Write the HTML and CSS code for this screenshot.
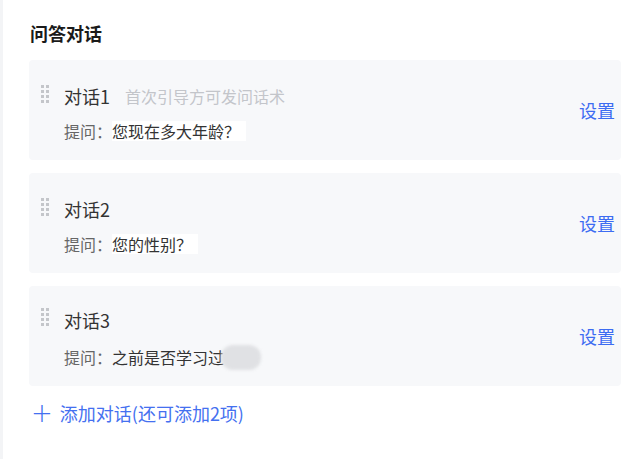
FILE: index.html
```html
<!DOCTYPE html>
<html lang="zh-CN">
<head>
  <meta charset="UTF-8">
  <meta name="viewport" content="width=device-width, initial-scale=1">
  <title>问答对话</title>
  <link rel="stylesheet" href="styles.css">
</head>
<body>
  <!-- Panel de diálogos -->
  <div class="panel">
    <h2 class="panel-title">问答对话</h2>

    <div class="dialog">
      <div class="dialog-main">
        <div class="dialog-head">
          <span class="handle"><i></i><i></i><i></i><i></i><i></i><i></i><i></i><i></i></span>
          <span class="dialog-name">对话1</span>
          <span class="dialog-hint">首次引导方可发问话术</span>
        </div>
        <div class="dialog-ask">提问：<span class="ask-text hl">您现在多大年龄？</span></div>
      </div>
      <a class="dialog-set" href="#">设置</a>
    </div>

    <div class="dialog">
      <div class="dialog-main">
        <div class="dialog-head">
          <span class="handle"><i></i><i></i><i></i><i></i><i></i><i></i><i></i><i></i></span>
          <span class="dialog-name">对话2</span>
        </div>
        <div class="dialog-ask">提问：<span class="ask-text hl">您的性别？</span></div>
      </div>
      <a class="dialog-set" href="#">设置</a>
    </div>

    <div class="dialog">
      <div class="dialog-main">
        <div class="dialog-head">
          <span class="handle"><i></i><i></i><i></i><i></i><i></i><i></i><i></i><i></i></span>
          <span class="dialog-name">对话3</span>
        </div>
        <div class="dialog-ask">提问：<span class="ask-text">之前是否学习过</span><span class="blur"></span></div>
      </div>
      <a class="dialog-set" href="#">设置</a>
    </div>

    <a class="add-btn" href="#"><span class="plus">+</span>添加对话(还可添加2项)</a>
  </div>
</body>
</html>
```

FILE: styles.css
```css
/* Estructura general */
body {
  margin: 0;
  background: #fff;
  font-family: "Noto Sans CJK SC", "Noto Sans", sans-serif;
  border-left: 3px solid #f3f4f6;   /* franja gris a la izquierda */
  min-height: 100vh;
  box-sizing: border-box;
}

.panel {
  padding: 18px 0 0 26px;
}

.panel-title {
  margin: 0 0 12px 1px;
  font-size: 18px;
  line-height: 30px;
  font-weight: bold;
  color: #1a1a1a;
}

/* Tarjeta de cada diálogo */
.dialog {
  display: flex;
  align-items: center;
  height: 100px;
  box-sizing: border-box;
  background: #f7f8fa;
  border-radius: 4px;
  padding: 0 6px 0 12px;
  margin-bottom: 13px;
}

.dialog-main {
  flex: 1;
  padding-top: 4px;
}

.dialog-head {
  display: flex;
  align-items: center;
  height: 26px;
}

/* Icono para arrastrar: 2 columnas de puntos */
.handle {
  display: grid;
  grid-template-columns: 3px 3px;
  column-gap: 2px;
  row-gap: 2px;
  width: 8px;
  margin: -5px 15px 0 0;
}

.handle i {
  width: 3px;
  height: 3px;
  background: #c4c6ca;
}

.dialog-name {
  font-size: 18px;
  color: #333;
}

.dialog-hint {
  margin-left: 15px;
  font-size: 16px;
  color: #c3c5ca;
}

.dialog-ask {
  margin: 12px 0 0 23px;
  font-size: 16px;
  line-height: 20px;
  color: #666;
  display: flex;
  align-items: center;
}

.ask-text {
  color: #333;
}

.ask-text.hl {
  background: #fff;
  padding-right: 6px;
}

/* Mancha difuminada (texto oculto) */
.blur {
  display: inline-block;
  width: 40px;
  height: 25px;
  margin-left: -3px;
  border-radius: 12px;
  background: #e0e1e4;
  filter: blur(1.5px);
}

.dialog-set {
  font-size: 18px;
  color: #3d6cf2;
  text-decoration: none;
}

/* Botón para añadir */
.add-btn {
  display: inline-flex;
  align-items: center;
  margin: 1px 0 0 2px;
  font-size: 18px;
  line-height: 26px;
  color: #4470f0;
  text-decoration: none;
}

.plus {
  font-size: 26px;
  font-weight: 200;
  margin-right: 7px;
  font-family: "DejaVu Sans", sans-serif;
}
```
